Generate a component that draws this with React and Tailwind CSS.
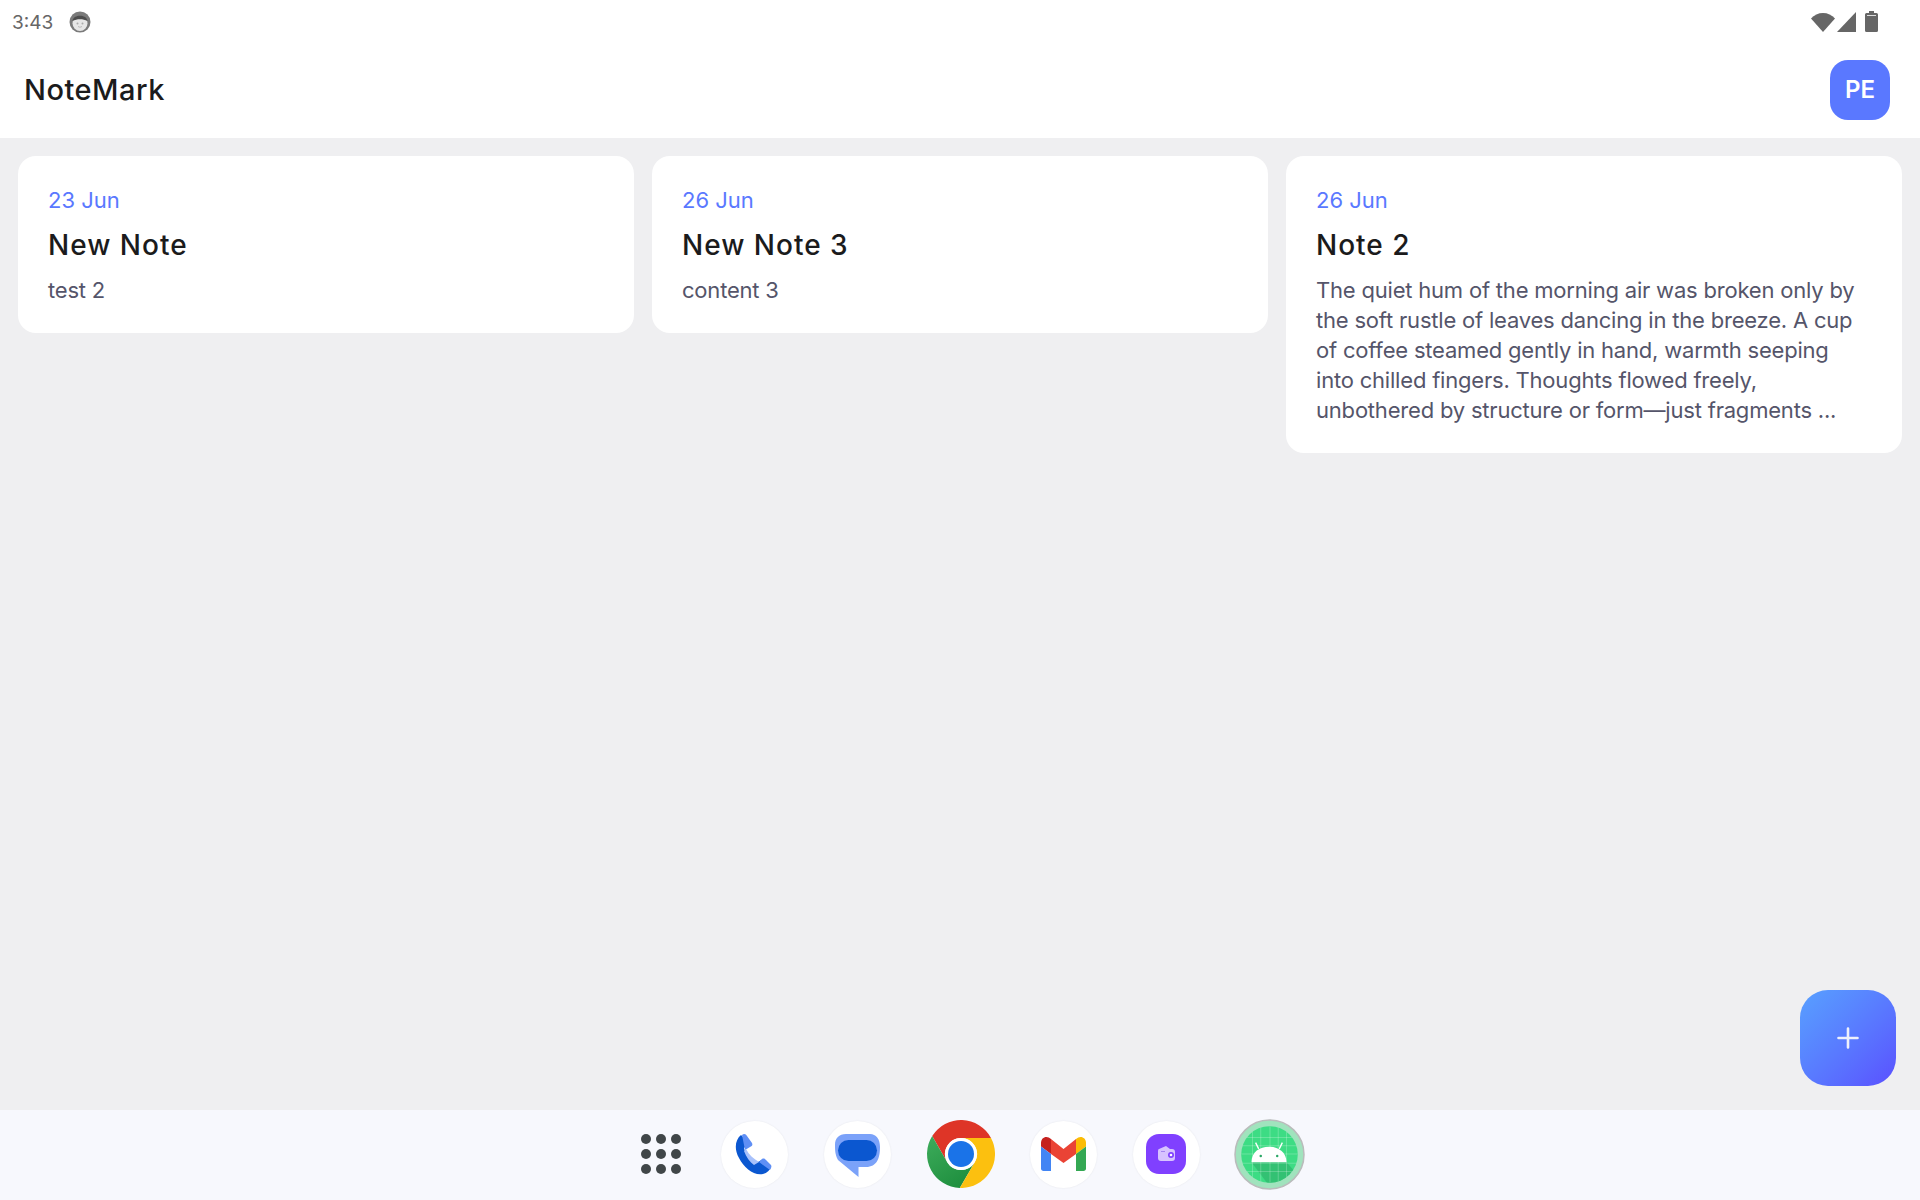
import React from 'react';

const notes = [
  { date: '23 Jun', title: 'New Note', body: 'test 2' },
  { date: '26 Jun', title: 'New Note 3', body: 'content 3' },
  {
    date: '26 Jun',
    title: 'Note 2',
    body: 'The quiet hum of the morning air was broken only by the soft rustle of leaves dancing in the breeze. A cup of coffee steamed gently in hand, warmth seeping into chilled fingers. Thoughts flowed freely, unbothered by structure or form—just fragments ...',
  },
];

const DockCircle = ({ children }) => (
  <div className="w-[67px] h-[67px] rounded-full bg-white shadow-[0_0_2px_rgba(0,0,0,0.08)] shrink-0">
    <svg viewBox="0 0 67 67" className="w-[67px] h-[67px] block">{children}</svg>
  </div>
);

const StatusFace = () => (
  <svg viewBox="0 0 22 22" className="w-[22px] h-[22px] block">
    <circle cx="11" cy="11" r="10.5" fill="#7a7a7a" />
    <circle cx="11" cy="12.5" r="7.5" fill="#e6e6e6" />
    <path d="M3.5 10 C4 3 18 3 18.5 10 C14 7.5 8 7.5 3.5 10Z" fill="#4d4d4d" />
    <circle cx="8.5" cy="12.5" r="1" fill="#aaa" />
    <circle cx="13.5" cy="12.5" r="1" fill="#aaa" />
    <path d="M9 15.5 Q11 17 13 15.5" stroke="#bbb" strokeWidth="1" fill="none" />
  </svg>
);

const StatusIcons = () => (
  <div className="flex items-center gap-[2px] mr-[42px]">
    <svg viewBox="0 0 24 20" className="w-[24px] h-[20px] block">
      <path d="M0 6.5 C6 -1 18 -1 24 6.5 L12 20Z" fill="#666" />
    </svg>
    <svg viewBox="0 0 20 20" className="w-[20px] h-[20px] block">
      <path d="M0 20 L19 0 V20Z" fill="#666" />
    </svg>
    <svg viewBox="0 0 13 21" className="w-[13px] h-[21px] block ml-[6px] -mt-[2px]">
      <path d="M4 0 H9 V2 H11.5 Q13 2 13 3.5 V19.5 Q13 21 11.5 21 H1.5 Q0 21 0 19.5 V3.5 Q0 2 1.5 2 H4Z" fill="#666" />
      <rect x="2" y="4" width="9" height="1" fill="#ddd" />
    </svg>
  </div>
);

const PhoneIcon = () => (
  <DockCircle>
    <path d="M20 14 C14 19 13 28 18 37 C23 47 33 55 42 53 C46 52 49 49 50 46 L42 38 L37 41 C31 41 24 33 23 27 L28 22 Z" fill="#0b57d0" />
    <path d="M21 14 C23 12 25 13 26 15 L31 22 C32 24 31 25 29 26 L24 29 Z" fill="#5f8ff5" />
    <path d="M23 30 C25 36 29 41 33 44 L38 41 C33 38 28 34 25 28 Z" fill="#a8c1fb" />
    <path d="M38 41 L41 38 C43 37 44 38 45 39 L50 44 C51 46 50 47 49 49 Z" fill="#5f8ff5" />
  </DockCircle>
);

const MessagesIcon = () => (
  <DockCircle>
    <path d="M22 13 H46 C52 13 56 18 56 26 C56 37 53 46 42 46 H34.5 V56 L14 39 C11 34 11 28 11 24 C11 17 15 13 22 13Z" fill="#7ba2f9" />
    <rect x="14" y="19" width="39" height="21" rx="10.5" fill="#0b57d0" />
  </DockCircle>
);

const ChromeIcon = () => (
  <svg viewBox="0 0 68 68" className="w-[68px] h-[68px] block shrink-0 -ml-[0.5px] -mr-[0.5px] translate-x-[1px]">
    <defs>
      <linearGradient id="chromeGreen" x1="0.1" y1="0" x2="0.7" y2="1">
        <stop offset="0" stopColor="#3cab5a" />
        <stop offset="1" stopColor="#1e8e3e" />
      </linearGradient>
    </defs>
    <path d="M34 18 H64 A34 34 0 0 0 5.2 16 L20.1 42 A16 16 0 0 1 34 18Z" fill="#de3527" />
    <path d="M5.2 16 A34 34 0 0 0 32.8 68 L47.9 42 A16 16 0 0 1 20.1 42Z" fill="url(#chromeGreen)" />
    <path d="M64 18 A34 34 0 0 1 32.8 68 L47.9 42 A16 16 0 0 0 34 18Z" fill="#fcc00f" />
    <circle cx="34" cy="34" r="16" fill="#fff" />
    <circle cx="34" cy="34" r="13" fill="#1a73e8" />
  </svg>
);

const GmailIcon = () => (
  <DockCircle>
    <path d="M21 18 L33.5 28 L46 18 V33 L33.5 42 L21 33Z" fill="#ea4335" />
    <path d="M11 22 C11 16 17 14 21 18 V33 L11 25.5Z" fill="#c5221f" />
    <path d="M56 22 C56 16 50 14 46 18 V33 L56 25.5Z" fill="#fbbc04" />
    <path d="M11 25.5 L21 33 V50 H13.5 C12 50 11 49 11 47.5Z" fill="#4285f4" />
    <path d="M56 25.5 L46 33 V50 H53.5 C55 50 56 49 56 47.5Z" fill="#34a853" />
  </DockCircle>
);

const WalletIcon = () => (
  <DockCircle>
    <rect x="13" y="13" width="40" height="40" rx="13" fill="#8040ff" />
    <path d="M26 28 L33 25 L37 28 H39 Q42 28 42 31 V37 Q42 40 39 40 H28 Q25 40 25 37 V30 Q25 28 26 28Z" fill="#d7c3ff" />
    <rect x="28" y="30" width="4" height="1" fill="#a585f0" />
    <circle cx="38" cy="34" r="3" fill="#8040ff" />
    <circle cx="38" cy="34" r="1.3" fill="#fff" />
  </DockCircle>
);

const AndroidIcon = () => (
  <svg viewBox="0 0 69 69" className="w-[71px] h-[71px] block shrink-0 -mx-[2px]">
    <defs>
      <clipPath id="androidClip">
        <circle cx="34.5" cy="34.5" r="27.5" />
      </clipPath>
    </defs>
    <circle cx="34.5" cy="34.5" r="33.5" fill="#a0e3bd" stroke="#b9bcbb" strokeWidth="1.5" />
    <circle cx="34.5" cy="34.5" r="27.5" fill="#3ddc84" />
    <g clipPath="url(#androidClip)">
      <path d="M17 42 H51 L60 52 L38 70 Z" fill="#2fb56c" opacity="0.7" />
      <path
        d="M7 18 H62 M7 26 H62 M7 34 H62 M7 43 H62 M7 51 H62 M18 7 V62 M26 7 V62 M35 7 V62 M43 7 V62 M51 7 V62"
        stroke="#ffffff"
        strokeOpacity="0.28"
        strokeWidth="0.8"
      />
    </g>
    <path d="M17 42 C17 32 25 27 34 27 C43 27 51 32 51 42Z" fill="#fff" />
    <path d="M24 29 L21 23 M44 29 L47 23" stroke="#fff" strokeWidth="1.3" />
    <circle cx="26" cy="36" r="1.2" fill="#2aa866" />
    <circle cx="42" cy="36" r="1.2" fill="#2aa866" />
  </svg>
);

const AppGrid = () => (
  <div className="w-[67px] h-[67px] shrink-0 -mr-[9px] flex items-center justify-center translate-x-[1px]">
    <div className="grid grid-cols-3 gap-[5px]">
      {Array.from({ length: 9 }).map((_, i) => (
        <div key={i} className="w-[10px] h-[10px] rounded-full bg-[#404648]" />
      ))}
    </div>
  </div>
);

const NoteCard = ({ note }) => (
  <div className="bg-white rounded-[18px] pt-[30px] pb-[28px] px-[30px]">
    <div className="text-[#5a78ff] text-[22px] leading-[28px]">{note.date}</div>
    <div className="text-[#1b1b1c] text-[28px] leading-[36px] mt-[13px] font-medium tracking-[1px]">{note.title}</div>
    <p className="text-[#55556a] text-[22px] leading-[30px] mt-[12px] tracking-[-0.2px]">{note.body}</p>
  </div>
);

export default function App() {
  return (
    <div className="relative h-screen flex flex-col bg-[#efeff1] font-['Inter',sans-serif] overflow-hidden">
      {/* Status bar + header */}
      <div className="bg-white">
        <div className="h-[44px] flex items-center justify-between">
          <div className="flex items-center pl-[12px]">
            <span className="text-[#666] text-[19px] leading-none">3:43</span>
            <div className="ml-[16px]">
              <StatusFace />
            </div>
          </div>
          <StatusIcons />
        </div>
        <div className="h-[94px] pb-[2px] pl-[24px] pr-[30px] flex items-center justify-between">
          <h1 className="text-[#1b1b1c] text-[29px] font-medium tracking-[0.5px]">NoteMark</h1>
          <div className="w-[60px] h-[60px] rounded-[18px] bg-[#5a78ff] text-white text-[24px] font-semibold flex items-center justify-center">
            PE
          </div>
        </div>
      </div>

      {/* Notes */}
      <div className="flex-1 grid grid-cols-3 gap-[18px] p-[18px] items-start">
        {notes.map((note, i) => (
          <NoteCard key={i} note={note} />
        ))}
      </div>

      {/* Dock */}
      <div className="h-[90px] bg-[#f7f8fd] flex items-center justify-center gap-[36px] pl-[9px] pb-[2px]">
        <AppGrid />
        <PhoneIcon />
        <MessagesIcon />
        <ChromeIcon />
        <GmailIcon />
        <WalletIcon />
        <AndroidIcon />
      </div>

      {/* FAB */}
      <button className="absolute right-[24px] bottom-[114px] w-[96px] h-[96px] rounded-[28px] bg-gradient-to-br from-[#58a0ff] to-[#5a4fff] flex items-center justify-center">
        <svg viewBox="0 0 22 22" className="w-[22px] h-[22px] block">
          <path d="M11 1.5 V20.5 M1.5 11 H20.5" stroke="#eef0fb" strokeWidth="2.6" strokeLinecap="round" />
        </svg>
      </button>
    </div>
  );
}
